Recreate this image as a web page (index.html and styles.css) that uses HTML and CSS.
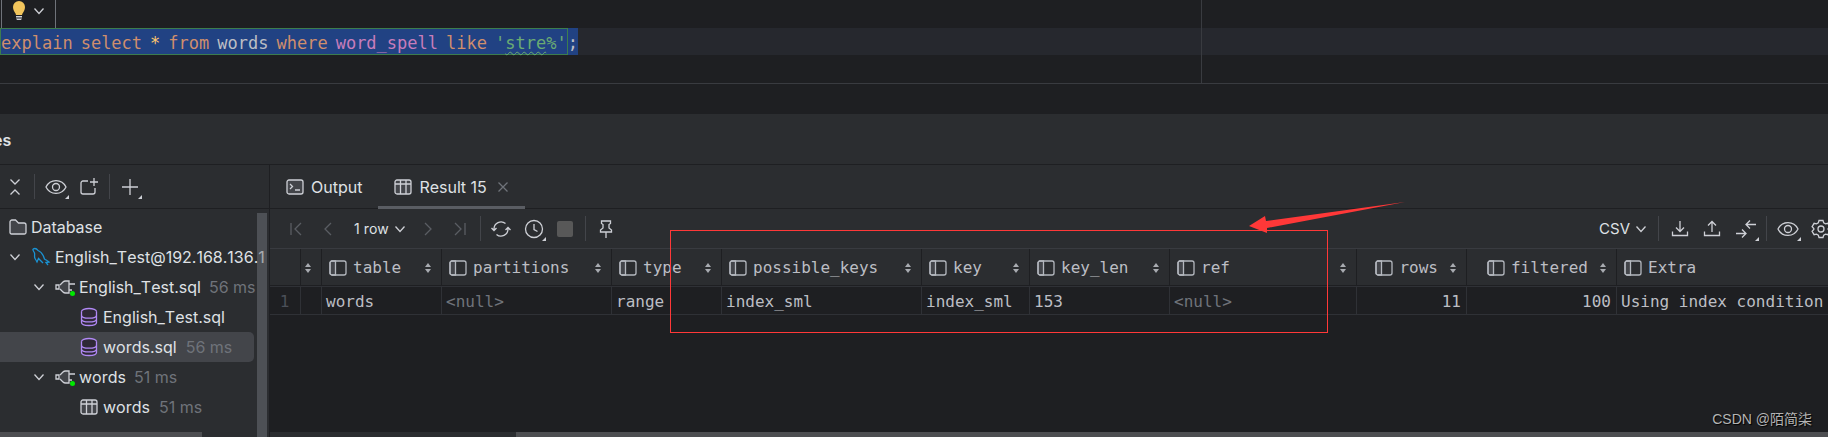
FILE: index.html
```html
<!DOCTYPE html>
<html lang="en">
<head>
<meta charset="utf-8">
<title>Services</title>
<link rel="stylesheet" href="styles.css">
</head>
<body>
<svg class="sprite" aria-hidden="true">
  <symbol id="chevron" viewBox="0 0 12 20"><path d="M1.5 7.5 6 12.5l4.5-5"/></symbol>
  <symbol id="collapse" viewBox="0 0 12 20"><path d="M1.500 2.500 6 7l4.500-4.500M1.500 17.500 6 13l4.500 4.500"/></symbol>
  <symbol id="eye" viewBox="0 0 22 20"><path d="M1 10C5 1.500 17 1.500 21 10 17 18.500 5 18.500 1 10z"/><circle cx="11" cy="10" r="3.500"/></symbol>
  <symbol id="newtab" viewBox="0 0 20 20"><path d="M9 4H4a2 2 0 0 0-2 2v9a2 2 0 0 0 2 2h10a2 2 0 0 0 2-2v-4M15 1v8M11 5h8"/></symbol>
  <symbol id="plus" viewBox="0 0 20 20"><path d="M10 2v16M2 10h16"/></symbol>
  <symbol id="folder" viewBox="0 0 18 18"><path class="tint" d="M1 4a2 2 0 0 1 2-2h3.500l3 3H15a2 2 0 0 1 2 2v7.500a1.500 1.500 0 0 1-1.500 1.500h-13A1.500 1.500 0 0 1 1 14.500z"/></symbol>
  <symbol id="dolphin" viewBox="0 0 20 20"><path d="M2 2c2-1 4 0 5 1.500 4 1.500 5.500 5 6.500 8.500 1.500 1 3.500 2 4.500 3l-3 .5 2 2.500M2 2c-.500 1.500 1 2.500 1.500 4s-.500 4 .500 5.500 1.500 2.500 2 3.500l1.500-3.500 4.500 4.500"/></symbol>
  <symbol id="plug" viewBox="0 0 20 20"><path class="tint" d="M5 8 8 5q1-1 2.500-1H14v12h-3.500Q9 16 8 15l-3-3"/><path d="M1 8h3v4H1zM14 7h6M14 13h3"/><circle class="dot" cx="17.500" cy="16.500" r="2.500"/></symbol>
  <symbol id="database" viewBox="0 0 18 20"><ellipse cx="9" cy="4.500" rx="7.500" ry="3"/><path d="M1.500 4.500v11c0 4 15 4 15 0v-11M1.500 8.200c0 4 15 4 15 0M1.500 11.900c0 4 15 4 15 0"/></symbol>
  <symbol id="grid" viewBox="0 0 18 18"><rect class="tint" x="1" y="2" width="16" height="14" rx="2"/><path d="M1 6h16M6.500 2v14M12 2v14"/></symbol>
  <symbol id="console" viewBox="0 0 18 18"><rect class="tint" x="1" y="2" width="16" height="14" rx="2"/><path d="m4 6 2.500 2.500L4 11M9 12h5"/></symbol>
  <symbol id="column" viewBox="0 0 18 18"><path class="tint" d="M6.500 2v14H3a2 2 0 0 1-2-2V4a2 2 0 0 1 2-2z"/><rect x="1" y="2" width="16" height="14" rx="2"/></symbol>
  <symbol id="close" viewBox="0 0 12 20"><path d="m1.500 5.500 9 9M10.500 5.500l-9 9"/></symbol>
  <symbol id="first" viewBox="0 0 12 20"><path d="M1 4v12M11 4l-6 6 6 6"/></symbol>
  <symbol id="prev" viewBox="0 0 12 20"><path d="M9 4l-6 6 6 6"/></symbol>
  <symbol id="next" viewBox="0 0 12 20"><path d="m3 4 6 6-6 6"/></symbol>
  <symbol id="last" viewBox="0 0 12 20"><path d="M11 4v12M1 4l6 6-6 6"/></symbol>
  <symbol id="refresh" viewBox="0 0 20 20"><path d="M3 11.500V10a7 7 0 0 1 11.500-5.400M17 8.500V10a7 7 0 0 1-11.500 5.400M.500 9 3 11.500 5.500 9M14.500 11 17 8.500l2.500 2.500"/></symbol>
  <symbol id="clock" viewBox="0 0 20 20"><circle cx="10" cy="10" r="8.500"/><path d="M10 5v5.500l3.500 2"/></symbol>
  <symbol id="pin" viewBox="0 0 14 20"><path d="M2.500 2h9v2.500l-1.500 1V9l2.500 2v2h-11v-2L4 9V5.500l-1.500-1zM7 13v6"/></symbol>
  <symbol id="download" viewBox="0 0 18 20"><path d="M9 2v10M5 8.500 9 12.500l4-4M1.500 12.500v4h15v-4"/></symbol>
  <symbol id="upload" viewBox="0 0 18 20"><path d="M9 13V3M5 6.500l4-4 4 4M1.500 12.500v4h15v-4"/></symbol>
  <symbol id="compare" viewBox="0 0 22 20"><path d="M21 5.500H11M15 1.500l-4 4 4 4M1 14.500h10M7 10.500l4 4-4 4"/></symbol>
  <symbol id="gear" viewBox="0 0 20 20"><path d="M8 1.500h4l.7 2.400 1.800 1 2.400-.6 2 3.400L17.200 9.500v1l1.700 1.800-2 3.400-2.400-.6-1.800 1-.7 2.400H8l-.7-2.400-1.800-1-2.400.6-2-3.400 1.700-1.800v-1L1.100 7.700l2-3.400 2.400.6 1.800-1z"/><circle cx="10" cy="10" r="3"/></symbol>
  <symbol id="sort" viewBox="0 0 6 10"><path class="solid" d="M0 4 3 0l3 4zM0 6h6l-3 4z"/></symbol>
</svg>

<main class="window">
  <section class="editor">
    <div class="intention">
      <svg class="bulb" viewBox="0 0 14 20"><path fill="#f2c55c" d="M7 0a6 6 0 0 0-6 6c0 3 1.500 5 2.500 6.500L4 14h6l.5-1.500C11.500 11 13 9 13 6a6 6 0 0 0-6-6z"/><path fill="#ced0d6" d="M4 15h6v1.500H4zM4 17.500h6L9 19H5z"/></svg>
      <svg class="icon narrow"><use href="#chevron"/></svg>
    </div>
    <div class="code-line">
      <code class="selection"><span class="statement"><span class="kw">explain</span> <span class="kw">select</span> <span class="star">*</span> <span class="kw">from</span> <span>words</span> <span class="kw">where</span> <span class="field">word_spell</span> <span class="kw">like</span> <span class="str">'<span class="typo">stre</span>%'</span></span><span class="end">;</span></code>
    </div>
    <div class="margin-guide"></div>
  </section>

  <header class="tool-title"><h1>es</h1></header>

  <div class="panes">
    <aside class="sidebar">
      <div class="side-tools">
        <button aria-label="Collapse all"><svg class="icon narrow"><use href="#collapse"/></svg></button>
        <i class="sep"></i>
        <button class="more" aria-label="View options"><svg class="icon wide"><use href="#eye"/></svg></button>
        <button class="newtab" aria-label="Open in new tab"><svg class="icon"><use href="#newtab"/></svg></button>
        <i class="sep"></i>
        <button class="more" aria-label="Add service"><svg class="icon"><use href="#plus"/></svg></button>
      </div>
      <ul class="tree">
        <li class="row l0"><svg class="icon small"><use href="#folder"/></svg>Database</li>
        <li class="row l1"><svg class="icon narrow"><use href="#chevron"/></svg><svg class="icon blue"><use href="#dolphin"/></svg>English_Test@192.168.136.1</li>
        <li class="row l2"><svg class="icon narrow"><use href="#chevron"/></svg><svg class="icon"><use href="#plug"/></svg>English_Test.sql<small>56 ms</small></li>
        <li class="row l3"><svg class="icon small violet"><use href="#database"/></svg>English_Test.sql</li>
        <li class="row l3 selected"><svg class="icon small violet"><use href="#database"/></svg>words.sql<small>56 ms</small></li>
        <li class="row l2"><svg class="icon narrow"><use href="#chevron"/></svg><svg class="icon"><use href="#plug"/></svg>words<small>51 ms</small></li>
        <li class="row l3"><svg class="icon small"><use href="#grid"/></svg>words<small>51 ms</small></li>
      </ul>
      <div class="side-vscroll"></div>
      <div class="side-hscroll"></div>
    </aside>

    <section class="results">
      <nav class="tabs">
        <button class="tab"><svg class="icon small"><use href="#console"/></svg>Output</button>
        <button class="tab active"><svg class="icon small"><use href="#grid"/></svg>Result 15<svg class="icon narrow dim"><use href="#close"/></svg></button>
      </nav>
      <div class="grid-tools">
        <div class="pager">
          <button disabled aria-label="First page"><svg class="icon narrow"><use href="#first"/></svg></button>
          <button disabled aria-label="Previous page"><svg class="icon narrow"><use href="#prev"/></svg></button>
          <button class="menu">1 row<svg class="icon narrow"><use href="#chevron"/></svg></button>
          <button disabled aria-label="Next page"><svg class="icon narrow"><use href="#next"/></svg></button>
          <button disabled aria-label="Last page"><svg class="icon narrow"><use href="#last"/></svg></button>
        </div>
        <i class="sep"></i>
        <div class="actions">
          <button aria-label="Reload"><svg class="icon"><use href="#refresh"/></svg></button>
          <button class="more" aria-label="History"><svg class="icon"><use href="#clock"/></svg></button>
          <button class="stop" disabled aria-label="Stop"></button>
        </div>
        <i class="sep"></i>
        <button class="pin" aria-label="Pin tab"><svg class="icon pin-icon"><use href="#pin"/></svg></button>
        <div class="export">
          <button class="menu">CSV<svg class="icon narrow"><use href="#chevron"/></svg></button>
          <i class="sep"></i>
          <div class="transfer">
            <button aria-label="Export"><svg class="icon small"><use href="#download"/></svg></button>
            <button aria-label="Import"><svg class="icon small"><use href="#upload"/></svg></button>
            <button class="more" aria-label="Compare"><svg class="icon wide"><use href="#compare"/></svg></button>
          </div>
          <i class="sep"></i>
          <div class="settings">
            <button class="more" aria-label="View"><svg class="icon wide"><use href="#eye"/></svg></button>
            <button class="more" aria-label="Settings"><svg class="icon"><use href="#gear"/></svg></button>
          </div>
        </div>
      </div>
      <div class="table-wrap">
        <table>
          <colgroup><col class="c-num"><col class="c-cut"><col class="c-table"><col class="c-part"><col class="c-type"><col class="c-keys"><col class="c-key"><col class="c-len"><col class="c-ref"><col class="c-rows"><col class="c-filt"><col class="c-extra"></colgroup>
          <thead>
            <tr>
              <th></th>
              <th class="cut"><div class="head"><svg class="sort"><use href="#sort"/></svg></div></th>
              <th><div class="head"><svg class="icon small"><use href="#column"/></svg>table<svg class="sort"><use href="#sort"/></svg></div></th>
              <th><div class="head"><svg class="icon small"><use href="#column"/></svg>partitions<svg class="sort"><use href="#sort"/></svg></div></th>
              <th><div class="head"><svg class="icon small"><use href="#column"/></svg>type<svg class="sort"><use href="#sort"/></svg></div></th>
              <th><div class="head"><svg class="icon small"><use href="#column"/></svg>possible_keys<svg class="sort"><use href="#sort"/></svg></div></th>
              <th><div class="head"><svg class="icon small"><use href="#column"/></svg>key<svg class="sort"><use href="#sort"/></svg></div></th>
              <th><div class="head"><svg class="icon small"><use href="#column"/></svg>key_len<svg class="sort"><use href="#sort"/></svg></div></th>
              <th><div class="head"><svg class="icon small"><use href="#column"/></svg>ref<svg class="sort"><use href="#sort"/></svg></div></th>
              <th class="num"><div class="head"><svg class="icon small"><use href="#column"/></svg>rows<svg class="sort"><use href="#sort"/></svg></div></th>
              <th class="num"><div class="head"><svg class="icon small"><use href="#column"/></svg>filtered<svg class="sort"><use href="#sort"/></svg></div></th>
              <th><div class="head"><svg class="icon small"><use href="#column"/></svg>Extra<svg class="sort"><use href="#sort"/></svg></div></th>
            </tr>
          </thead>
          <tbody>
            <tr>
              <td class="index">1</td><td></td><td>words</td><td class="null">&lt;null&gt;</td><td>range</td><td>index_sml</td><td>index_sml</td><td>153</td><td class="null">&lt;null&gt;</td><td class="num">11</td><td class="num">100</td><td>Using index condition</td>
            </tr>
          </tbody>
        </table>
      </div>
      <div class="grid-hscroll"><div class="thumb"></div></div>
    </section>
  </div>

  <div class="callout"></div>
  <svg class="arrow" viewBox="0 0 156 32"><path d="M0 25 16 15l1 5L156 1 18 27v5z"/></svg>
  <p class="watermark">CSDN @陌简柒</p>
</main>
</body>
</html>
```
FILE: styles.css
```css
* { box-sizing: border-box; }

body {
  margin: 0;
  background: #1e1f22;
  color: #dfe1e5;
  font: 16px/20px Inter, "Noto Sans", sans-serif;
  font-kerning: none;
}

button {
  position: relative;
  display: flex;
  align-items: center;
  padding: 0;
  border: 0;
  background: none;
  color: inherit;
  font: inherit;
  font-kerning: none;
}

.sprite { position: absolute; width: 0; height: 0; }

.icon {
  flex: none;
  width: 20px;
  height: 20px;
  fill: none;
  stroke: #ced0d6;
  stroke-width: 1.3;
}
.icon.narrow { width: 12px; }
.icon.small { width: 18px; }
.icon.wide { width: 22px; }
.icon.blue { stroke: #1a93d4; }
.icon.violet { stroke: #b189f5; fill: #2f2936; }
.icon.dim { stroke: #6f737a; }
button:disabled .icon { stroke: #5a5d63; }
.tint { fill: #43454a; }
.dot { fill: #00e800; stroke: none; }
.solid { fill: #a8abb0; }

.sep {
  flex: none;
  width: 1px;
  height: 25px;
  background: #43454a;
}

.more::after {
  content: "";
  position: absolute;
  right: -2px;
  bottom: -2px;
  border: 2px solid;
  border-color: transparent #ced0d6 #ced0d6 transparent;
}

.window {
  position: relative;
  display: flex;
  flex-direction: column;
  min-height: 100vh;
  overflow: hidden;
}

/* Editor */
.editor {
  position: relative;
  height: 84px;
  margin-bottom: 30px;
  border-bottom: 1px solid #393b40;
}
.intention {
  display: flex;
  align-items: center;
  gap: 7px;
  width: 55px;
  height: 28px;
  margin-left: 1px;
  padding: 0 0 6px 10px;
  border: solid #6f737a;
  border-width: 0 1px;
}
.bulb { width: 14px; height: 20px; }
.code-line {
  display: flex;
  height: 27px;
  background: #26282e;
}
.selection,
.statement { display: flex; }
.selection {
  background: #214283;
  color: #bcbec4;
  font: 17px/21px "DejaVu Sans Mono", "Liberation Mono", monospace;
}
.statement {
  gap: 8px;
  padding-top: 4px;
  border: 1px solid #3c7d4f;
}
.end { padding-top: 5px; }
.kw { color: #cf8e6d; }
.star { color: #ffc66d; }
.field { color: #c77dbb; }
.str { color: #6aab73; }
.typo { text-decoration: underline wavy 1px #6aab73; text-underline-offset: 2px; }
.margin-guide {
  position: absolute;
  top: 0;
  bottom: 0;
  left: 1201px;
  width: 1px;
  background: #393b40;
}

/* Tool window */
.tool-title {
  height: 51px;
  padding: 16px 0;
  border-bottom: 1px solid #1e1f22;
  background: #2b2d30;
}
.tool-title h1 {
  margin: 0 0 0 -7px;
  font-size: 16px;
  line-height: 20px;
  font-weight: 600;
}
.panes { display: flex; flex: 1; }

.sidebar {
  position: relative;
  flex: none;
  width: 270px;
  border-right: 1px solid #1e1f22;
  background: #2b2d30;
  overflow: hidden;
}
.side-tools {
  display: flex;
  align-items: center;
  gap: 10px;
  height: 44px;
  padding: 0 9px;
  border-bottom: 1px solid #1e1f22;
}
.side-tools .sep:first-of-type { margin-left: 3px; }
.newtab { margin-left: 2px; }
.tree {
  margin: 0;
  padding: 3px 0 10px;
  list-style: none;
}
.row {
  display: flex;
  align-items: center;
  gap: 4px;
  height: 30px;
  white-space: nowrap;
}
.row small { margin-left: 4px; color: #6f737a; font-size: 16px; }
.row .narrow + .icon { margin-left: 6px; }
.l0,
.l1 { padding-left: 9px; }
.l2 { padding-left: 33px; }
.l3 { padding-left: 80px; gap: 5px; }
.selected {
  margin-right: 15px;
  border-radius: 0 5px 5px 0;
  background: #43454a;
}
.side-vscroll {
  position: absolute;
  top: 48px;
  right: 2px;
  bottom: 0;
  width: 10px;
  background: #6f737a80;
}
.side-hscroll {
  position: absolute;
  bottom: 0;
  left: 0;
  width: 75%;
  height: 5px;
  background: #4d4e51;
}

.results {
  display: flex;
  flex: 1;
  flex-direction: column;
  min-width: 0;
}
.tabs {
  display: flex;
  height: 44px;
  border-bottom: 1px solid #1e1f22;
  background: #2b2d30;
}
.tab {
  gap: 7px;
  height: 44px;
  padding: 0 16px;
}
.tab .dim { margin-left: 3px; }
.tab.active { box-shadow: inset 0 -3px #5a5d63; }
.grid-tools {
  display: flex;
  align-items: center;
  height: 40px;
  border-bottom: 1px solid #393b40;
  background: #2b2d30;
}
.menu { gap: 5px; }
.pager { display: flex; gap: 20px; padding: 0 14px 0 20px; }
.pager .menu { margin-right: -4px; font-size: 14px; }
.actions { display: flex; align-items: center; gap: 13px; padding: 0 12px 0 10px; }
.stop { width: 16px; height: 16px; border-radius: 2px; background: #585858; }
.pin { margin-left: 13px; }
.pin-icon { width: 14px; }
.export { display: flex; align-items: center; margin-left: auto; }
.export .menu { margin-right: 11px; font-size: 15px; }
.transfer { display: flex; gap: 14px; padding: 0 9px 0 12px; }
.settings { display: flex; gap: 12px; margin-right: -3px; padding-left: 10px; }

.table-wrap { flex: 1; overflow: hidden; }
table {
  width: 1575px;
  border-collapse: separate;
  border-spacing: 0;
  table-layout: fixed;
  color: #bcbec4;
  font: 16px/20px "DejaVu Sans Mono", "Liberation Mono", monospace;
}
th {
  height: 37px;
  padding: 2px 10px 0 7px;
  border-right: 1px solid #1e1f22;
  border-bottom: 1px solid #1e1f22;
  background: #2b2d30;
  font-weight: 400;
}
td {
  height: 29px;
  padding: 2px 5px 0 4px;
  border: solid #2f3136;
  border-width: 1px 1px 1px 0;
  white-space: nowrap;
}
.head { display: flex; align-items: center; gap: 6px; }
.head .icon { stroke: #b4b8bf; stroke-width: 1.3; }
.cut { padding-left: 4px; }
.sort { flex: none; width: 6px; height: 10px; margin-left: auto; }
.num { text-align: right; }
.num .head { justify-content: flex-end; }
.num .sort { margin-left: 6px; }
.index { color: #4b5059; text-align: center; }
.null { color: #6f737a; }
.c-num { width: 31px; }
.c-cut { width: 21px; }
.c-table { width: 120px; }
.c-part { width: 170px; }
.c-type { width: 110px; }
.c-keys { width: 200px; }
.c-key { width: 108px; }
.c-len { width: 140px; }
.c-ref { width: 187px; }
.c-rows { width: 110px; }
.c-filt { width: 150px; }
.c-extra { width: 228px; }

.grid-hscroll { height: 5px; background: #2b2d30; }
.thumb { height: 5px; margin-left: 246px; background: #4d4e51; }

/* Annotations */
.callout {
  position: absolute;
  top: 230px;
  left: 670px;
  width: 658px;
  height: 103px;
  border: 1px solid #ff3838;
}
.arrow {
  position: absolute;
  top: 201px;
  left: 1249px;
  width: 156px;
  height: 32px;
  fill: #ff3838;
}
.watermark {
  position: absolute;
  right: 16px;
  bottom: 8px;
  margin: 0;
  color: #b4b4b4;
  font: 14px/20px "Liberation Sans", "Noto Sans CJK SC", sans-serif;
  text-shadow: 1px 1px 1px #000;
}
```
